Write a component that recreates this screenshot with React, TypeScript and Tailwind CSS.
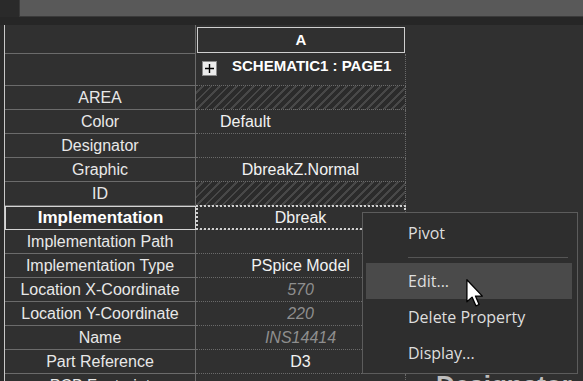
import React from "react";

type Row = {
  label: string;
  value?: string;
  hatch?: boolean;
  left?: boolean;
  dim?: boolean;
  selected?: boolean;
};

const rows: Row[] = [
  { label: "AREA", hatch: true },
  { label: "Color", value: "Default", left: true },
  { label: "Designator" },
  { label: "Graphic", value: "DbreakZ.Normal" },
  { label: "ID", hatch: true },
  { label: "Implementation", value: "Dbreak", selected: true },
  { label: "Implementation Path" },
  { label: "Implementation Type", value: "PSpice Model" },
  { label: "Location X-Coordinate", value: "570", dim: true },
  { label: "Location Y-Coordinate", value: "220", dim: true },
  { label: "Name", value: "INS14414", dim: true },
  { label: "Part Reference", value: "D3" },
  { label: "PCB Footprint" },
];

function Cursor() {
  return (
    <svg width="18" height="28" viewBox="0 0 12 19" className="absolute left-[466px] top-[279px] z-30">
      <path
        d="M0.5 0.5 L0.5 15.5 L4 12.3 L6.6 18.2 L8.8 17.3 L6.3 11.6 L11 11.6 Z"
        fill="#ffffff"
        stroke="#000000"
        strokeWidth="0.9"
        strokeLinejoin="round"
      />
    </svg>
  );
}

export default function App() {
  return (
    <div
      className="relative w-[583px] h-[381px] overflow-hidden bg-[#303030] text-[#e4e4e4]"
      style={{ fontFamily: '"Liberation Sans", Arial, sans-serif' }}
    >
      {/* top toolbar strip */}
      <div className="flex h-[17px]">
        <div className="w-[19px] bg-[#2a2a2a]" />
        <div className="flex-1 bg-[#595959] border-l border-b border-[#3a3a3a]" />
      </div>
      <div className="h-[8px] bg-[#262626]" />

      {/* grid */}
      <div className="flex">
        <div className="w-[4px] self-stretch bg-[#2a2a2a]" />
        <div className="flex flex-col border-l border-[#c8c8c8]">
          {/* column header */}
          <div className="flex h-[29px]">
            <div className="w-[191px] border-b border-r border-[#6b6b6b]" />
            <div className="w-[210px] pl-[1px] pt-[2px]">
              <div className="h-[26px] w-[208px] border border-[#cfcfcf] flex items-center justify-center text-[15px] font-bold text-white">
                A
              </div>
            </div>
          </div>
          {/* schematic row */}
          <div className="flex h-[32px]">
            <div className="w-[191px] border-b border-r border-[#6b6b6b]" />
            <div className="w-[210px] border-b border-r border-dotted border-[#6a6a6a] flex items-start overflow-hidden">
              <div className="ml-[6px] mt-[7px] w-[15px] h-[15px] bg-[#ececec] border border-[#8a8a8a] flex items-center justify-center">
                <svg width="9" height="9" viewBox="0 0 9 9">
                  <path d="M0 4.5 H9 M4.5 0 V9" stroke="#000" strokeWidth="1.4" />
                </svg>
              </div>
              <div className="ml-[15px] mt-[3px] text-[15px] font-bold text-white whitespace-nowrap leading-[18px]">
                SCHEMATIC1 : PAGE1
              </div>
            </div>
          </div>
          {rows.map((r) => (
            <div key={r.label} className="flex h-[24px]">
              <div
                className={
                  r.selected
                    ? "w-[191px] border border-[#d4d4d4] flex items-center justify-center text-[17px] font-bold text-white whitespace-nowrap"
                    : "w-[191px] border-b border-r border-[#6b6b6b] flex items-center justify-center text-[16px] text-[#e8e8e8] whitespace-nowrap"
                }
              >
                {r.label}
              </div>
              <div
                className={
                  "relative w-[210px] border-b border-r border-dotted border-[#6a6a6a] flex items-center text-[16px] whitespace-nowrap " +
                  (r.left ? "justify-start pl-[24px] " : "justify-center ") +
                  (r.dim ? "italic text-[#8e8e8e] " : "text-[#f2f2f2] ") +
                  (r.hatch
                    ? "bg-[repeating-linear-gradient(135deg,#2b2b2b_0px,#2b2b2b_4px,#484848_4px,#484848_6px)]"
                    : "")
                }
              >
                {r.value}
                {r.selected && (
                  <div className="absolute -top-[1px] -bottom-[1px] left-0 right-[-1px] border-2 border-dotted border-[#d0d0d0]" />
                )}
              </div>
            </div>
          ))}
        </div>
      </div>

      {/* background canvas text partially visible */}
      <div
        className="absolute left-[436px] top-[372px] text-[26px] font-bold text-[#bdbdbd] leading-none"
        style={{ fontFamily: '"Liberation Sans", Arial, sans-serif' }}
      >
        Designator
      </div>

      {/* context menu */}
      <div
        className="absolute left-[362px] top-[212px] w-[216px] h-[162px] z-20 bg-[#2e2e2e] border border-[#5c5c5c] flex flex-col text-[16px] text-[#dedede]"
        style={{ fontFamily: '"Open Sans", "Noto Sans", sans-serif' }}
      >
        <div className="h-[40px] flex items-center pl-[45px]">Pivot</div>
        <div className="mx-[45px] mr-[9px] mt-[4px] h-px bg-[#555555]" />
        <div className="mt-[5px] mx-[3px] mr-[5px] h-[36px] bg-[#4a4a4a] flex items-center pl-[42px]">Edit...</div>
        <div className="h-[36px] flex items-center pl-[45px]">Delete Property</div>
        <div className="h-[36px] flex items-center pl-[45px]">Display...</div>
      </div>

      <Cursor />
    </div>
  );
}
